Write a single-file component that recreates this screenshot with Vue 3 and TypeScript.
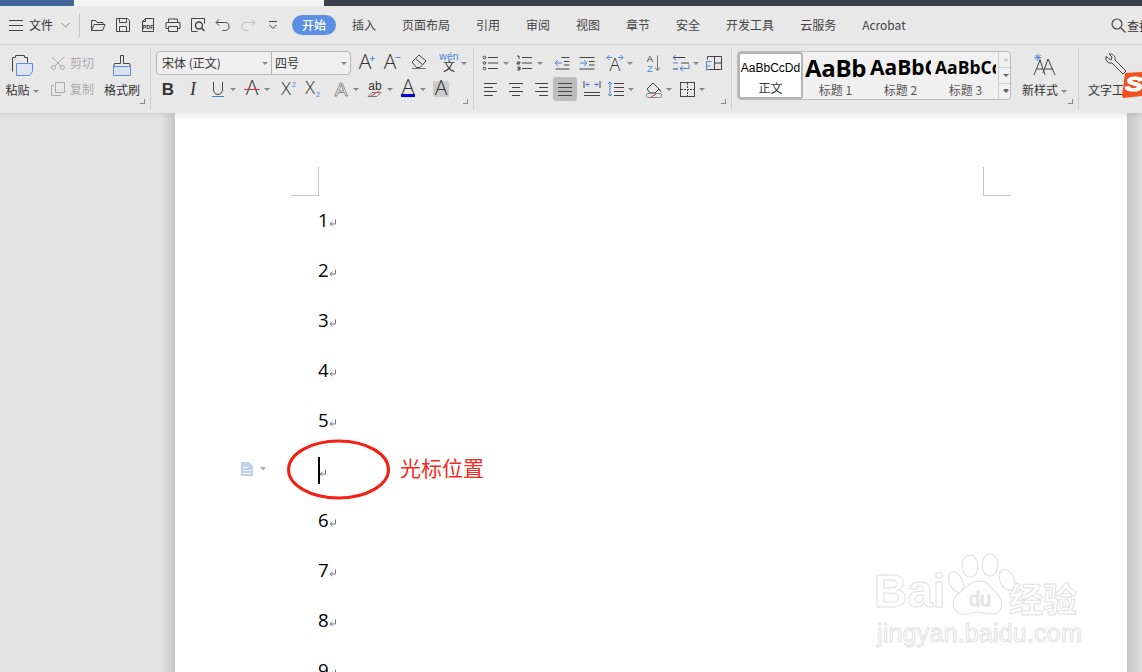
<script setup lang="ts">
interface Tool {
  i: string
  w: number
  caret?: boolean
  box?: boolean
}

const tabs = ['插入', '页面布局', '引用', '审阅', '视图', '章节', '安全', '开发工具', '云服务', 'Acrobat']
const quick = ['open', 'save', 'pdf', 'print', 'preview', 'undo', 'redo', 'more']
const lines = ['1', '2', '3', '4', '5', '', '6', '7', '8', '9']

const A = (extra = '', size = 21) =>
  `<text x="10" y="16" text-anchor="middle" font-family="Open Sans" font-weight="300" font-size="${size}" fill="#333" stroke="none" ${extra}>A</text>`

// every icon is drawn on a 20x20 box
const icons: Record<string, string> = {
  open: '<path d="M3.5 15.5v-10h4l1.5 2h6v2M3.5 15.5h11l2.5-6h-11z"/>',
  save: '<path d="M3.5 3.5h11l2 2v11h-13zM6.5 3.5v4h7v-4M6.5 16.5v-5h7v5"/>',
  pdf: '<path d="M7.5 3.5h8v13h-11v-10zM4.5 6.5h3v-3"/><text x="10" y="14" text-anchor="middle" font-family="Liberation Sans" font-weight="700" font-size="5.5" fill="#333" stroke="none">PDF</text>',
  print: '<path d="M5.5 7.5v-3.5h9v3.5M5.5 13.5h-2.5v-6h14v6h-2.5M5.5 11.5h9v5h-9z"/>',
  preview: '<path d="M16.5 8.5v-5h-13v13h6"/><circle cx="11" cy="10.5" r="3.5" stroke-width="1.4"/><path d="M13.5 13l3 3" stroke-width="1.5"/>',
  undo: '<path d="M6 4.5l-3 3 3 3M3.5 7.5h8a4 4 0 0 1 1 8h-3"/>',
  redo: '<path stroke="#bbb" d="M14 4.5l3 3-3 3M16.5 7.5h-8a4 4 0 0 0-1 8h3"/>',
  more: '<path d="M6 6.5h8M6.5 10l3.5 3.5 3.5-3.5"/>',
  grow: A('transform="translate(-1 0)"') + '<path stroke="#5a8fdc" d="M14 5.5h5M16.5 3v5"/>',
  shrink: A('transform="translate(-2 0)"') + '<path stroke="#5a8fdc" d="M13.5 4.5h5"/>',
  eraser: '<path d="M3 9l7-7 7 6-6 6.5h-3.5zM6.500 5.500l7 6"/><path stroke="#777" d="M3 15.500h14"/>',
  wen: '<text x="10" y="6.500" text-anchor="middle" font-family="Liberation Sans" font-size="10.500" fill="#4a86d8" stroke="none">wén</text><text x="10" y="18" text-anchor="middle" font-family="Noto Sans CJK SC" font-size="12" fill="#333" stroke="none">文</text>',
  bold: '<text x="10" y="16" text-anchor="middle" font-family="Liberation Sans" font-weight="700" font-size="17" fill="#333" stroke="none">B</text>',
  italic: '<text x="10" y="16" text-anchor="middle" font-family="Liberation Serif" font-style="italic" font-size="18" fill="#333" stroke="none">I</text>',
  under: '<path d="M5.500 3v8a4.500 4.500 0 0 0 9 0v-8"/><path stroke="#3f7fd8" d="M4 17.500h12"/>',
  strike: A('font-size="18"') + '<path stroke="#d33" d="M2 10.500h16"/>',
  sup: '<text x="8" y="16" text-anchor="middle" font-family="Open Sans" font-weight="300" font-size="18" fill="#333" stroke="none">X</text><text x="16" y="8" text-anchor="middle" font-family="Liberation Sans" font-size="7" fill="#4a86d8" stroke="none">2</text>',
  sub: '<text x="8" y="15" text-anchor="middle" font-family="Open Sans" font-weight="300" font-size="18" fill="#333" stroke="none">X</text><text x="16" y="18" text-anchor="middle" font-family="Liberation Sans" font-size="7" fill="#4a86d8" stroke="none">2</text>',
  outline: '<text x="10" y="16.500" text-anchor="middle" font-family="Liberation Sans" font-size="19" fill="#f4f4f4" stroke="#333" stroke-width=".5">A</text>',
  mark: '<text x="10" y="11" text-anchor="middle" font-family="Liberation Sans" font-size="12" fill="#333" stroke="none">ab</text><path d="M3 17.500l4-4h9l-4 4z" stroke="#777"/><path stroke="#d33" d="M6 17l8-5"/>',
  color: A('font-size="16" transform="translate(0 -1)"') + '<path stroke="#0000e0" stroke-width="3" d="M3 16.500h14"/>',
  shade: '<rect x="2" y="2" width="16" height="16" rx="1" fill="#ccc" stroke="none"/>' + A('font-size="16"'),
  bullets: '<circle cx="3.500" cy="4.500" r="1.300"/><circle cx="3.500" cy="10" r="1.300"/><circle cx="3.500" cy="15.500" r="1.300"/><path d="M7 4.500h10M7 10h10M7 15.500h10"/>',
  numbers: '<path d="M7 4.500h10M7 10h10M7 15.500h10M2 3h2v3M2 9h3v1h-3v1h3M2 14h3v3h-3M3 15.500h2"/>',
  outdent: '<path d="M9.500 4.500h8M12 8.500h5.500M12 12h5.500M3.500 16h14"/><path stroke="#4a86d8" d="M3 10h7M6 7l-3 3 3 3"/>',
  indent: '<path d="M2.500 4.500h15M12 8.500h5.500M12 12h5.500M2.500 16h15"/><path stroke="#4a86d8" d="M3 10h7M7 7l3 3-3 3"/>',
  dir: '<text x="10" y="18" text-anchor="middle" font-family="Open Sans" font-weight="300" font-size="18" fill="#333" stroke="none">A</text><path stroke="#4a86d8" d="M2 4.500h5M4.500 2l-2.500 2.500 2.500 2.500M13 4.500h5M15.500 2l2.500 2.500-2.500 2.500"/>',
  sort: '<text x="7" y="9" text-anchor="middle" font-family="Liberation Sans" font-size="9.500" fill="#333" stroke="none">A</text><text x="7" y="19" text-anchor="middle" font-family="Liberation Sans" font-size="9.500" fill="#4a86d8" stroke="none">Z</text><path stroke="#777" d="M14.500 2.500v15M12 14.500l2.500 3 2.500-3"/>',
  para: '<path d="M2 4.500h12M10 10h8M2 16h5"/><path stroke="#4a86d8" d="M5 2l-3 2.500 3 2.500M2 10h5M18 11.500v4h-9M12 13l-3 2.500 3 2.500"/>',
  table: '<path d="M3.500 3.500h14v13h-14M3.500 3.500v3M10.500 3.500v13M10.500 10h7"/><path stroke="#4a86d8" d="M2.500 8.500h5M2.500 8.500v9M2.500 13h4"/>',
  left: '<path d="M3 4.500h13M3 8.500h9M3 12.500h13M3 16.500h9"/>',
  center: '<path d="M3 4.500h14M6 8.500h8M3 12.500h14M6 16.500h8"/>',
  right: '<path d="M4 4.500h13M8 8.500h9M4 12.500h13M8 16.500h9"/>',
  justify: '<path d="M3 4.500h14M3 8.500h14M3 12.500h14M3 16.500h14"/>',
  dist: '<path d="M2 13.500h16M2 16.500h16M2 2v7M18 2v7"/><path stroke="#4a86d8" d="M4 5.500h4M6 3.500l-2 2 2 2M12 5.500h4M14 3.500l2 2-2 2"/>',
  spacing: '<path d="M8 4.500h10M8 8.500h10M8 12.500h10M8 16.500h10"/><path stroke="#4a86d8" d="M4 3v14M2 5l2-2 2 2M2 15l2 2 2-2"/>',
  fill: '<path d="M3 10l6-6 6 6-4 4h-5z"/><path d="M15 10l2 3"/><rect x="2.500" y="14.500" width="15" height="4" rx="1" stroke="#888"/><path stroke="#d33" d="M7 18l5-3"/>',
  border: '<rect x="3.500" y="3.500" width="14" height="14"/><path stroke-dasharray="2 1" d="M10.500 4v13M4 10.500h13"/>'
}

const row1: Tool[] = [
  { i: 'grow', w: 26 },
  { i: 'shrink', w: 27 },
  { i: 'eraser', w: 30 },
  { i: 'wen', w: 30, caret: true }
]
const row2: Tool[] = [
  { i: 'bold', w: 25 },
  { i: 'italic', w: 25 },
  { i: 'under', w: 34, caret: true },
  { i: 'strike', w: 35.5, caret: true },
  { i: 'sup', w: 24 },
  { i: 'sub', w: 29 },
  { i: 'outline', w: 34.5, caret: true },
  { i: 'mark', w: 32.5, caret: true },
  { i: 'color', w: 33.5, caret: true },
  { i: 'shade', w: 20 }
]
const row3: Tool[] = [
  { i: 'bullets', w: 34, caret: true },
  { i: 'numbers', w: 37, caret: true },
  { i: 'outdent', w: 25 },
  { i: 'indent', w: 27.5 },
  { i: 'dir', w: 38, caret: true },
  { i: 'sort', w: 28.5 },
  { i: 'para', w: 33, caret: true },
  { i: 'table', w: 20 }
]
const row4: Tool[] = [
  { i: 'left', w: 25 },
  { i: 'center', w: 25 },
  { i: 'right', w: 23.5 },
  { i: 'justify', w: 27.5, box: true },
  { i: 'dist', w: 24 },
  { i: 'spacing', w: 37.5, caret: true },
  { i: 'fill', w: 33.5, caret: true },
  { i: 'border', w: 30, caret: true }
]
const styles = [
  { cls: 's0', sample: 'AaBbCcDd', label: '正文' },
  { cls: 's1', sample: 'AaBb', label: '标题 1' },
  { cls: 's2', sample: 'AaBbC', label: '标题 2' },
  { cls: 's3', sample: 'AaBbCc', label: '标题 3' }
]
</script>

<template>
  <div class="app">
    <div class="titlebar">
      <div class="tb-blue"></div>
      <div class="tb-light"></div>
      <div class="tb-dark"></div>
    </div>

    <div class="menubar">
      <span class="burger"><i></i><i></i><i></i></span>
      <span class="file">文件</span>
      <svg class="chev" width="9" height="6" viewBox="0 0 9 6"><path d="M.5 1l4 4 4-4" /></svg>
      <span class="vsep"></span>
      <svg v-for="q in quick" :key="q" class="ico quick" width="20" height="20" viewBox="0 0 20 20" v-html="icons[q]"></svg>
      <span class="pill">开始</span>
      <div class="tabs">
        <span v-for="t in tabs" :key="t">{{ t }}</span>
      </div>
      <div class="search">
        <svg width="15" height="15" viewBox="0 0 15 15"><circle cx="6" cy="6" r="5" /><path d="M10 10l4.500 4.500" /></svg>
        <span>查找</span>
      </div>
    </div>

    <div class="ribbon">
      <div class="grp g1">
        <div class="big paste">
          <svg class="ico" width="24" height="24" viewBox="0 0 24 24">
            <path d="M2.500 18.500v-14h3v-2h9v2h3v5" />
            <path fill="#dbe5f3" stroke="#5a8fdc" d="M6.500 10.500h16v8l-3 4h-13z" />
          </svg>
          <span class="lbl">粘贴<b class="caret"></b></span>
        </div>
        <div class="small">
          <div class="smallrow">
            <svg class="ico off" width="16" height="16" viewBox="0 0 16 16"><circle cx="3.500" cy="12.500" r="2" /><circle cx="12.500" cy="12.500" r="2" /><path d="M2 2l9 9M14 2l-9 9" /></svg>
            <span>剪切</span>
          </div>
          <div class="smallrow">
            <svg class="ico off" width="16" height="16" viewBox="0 0 16 16"><path d="M5.500 1.500h9v10h-9zM3.500 4.500h-2v10h9v-1" /></svg>
            <span>复制</span>
          </div>
        </div>
        <div class="big brush">
          <svg class="ico" width="24" height="24" viewBox="0 0 24 24">
            <path d="M10.500 2.500h3v8h6l1 3h-17l1-3h6z" />
            <path fill="#dbe2ec" stroke="#5a8fdc" d="M3.500 13.500h17v9h-17z" />
          </svg>
          <span class="lbl">格式刷</span>
        </div>
        <span class="corner"></span>
      </div>

      <div class="grp g2">
        <div class="row">
          <div class="combo">
            <div class="combo-a">宋体 (正文)<b class="caret"></b></div>
            <div class="combo-b">四号<b class="caret"></b></div>
          </div>
          <div class="tools after-combo">
            <div v-for="t in row1" :key="t.i" class="tool" :style="{ width: t.w + 'px' }">
              <svg class="ico" width="20" height="20" viewBox="0 0 20 20" v-html="icons[t.i]"></svg>
              <b v-if="t.caret" class="caret"></b>
            </div>
          </div>
        </div>
        <div class="row tools">
          <div v-for="t in row2" :key="t.i" class="tool" :style="{ width: t.w + 'px' }">
            <svg class="ico" width="20" height="20" viewBox="0 0 20 20" v-html="icons[t.i]"></svg>
            <b v-if="t.caret" class="caret"></b>
          </div>
        </div>
        <span class="corner"></span>
      </div>

      <div class="grp g3">
        <div class="row tools">
          <div v-for="t in row3" :key="t.i" class="tool" :style="{ width: t.w + 'px' }">
            <svg class="ico" width="20" height="20" viewBox="0 0 20 20" v-html="icons[t.i]"></svg>
            <b v-if="t.caret" class="caret"></b>
          </div>
        </div>
        <div class="row tools">
          <div v-for="t in row4" :key="t.i" class="tool" :style="{ width: t.w + 'px' }">
            <span :class="{ pressed: t.box }">
              <svg class="ico" width="20" height="20" viewBox="0 0 20 20" v-html="icons[t.i]"></svg>
            </span>
            <b v-if="t.caret" class="caret"></b>
          </div>
        </div>
        <span class="corner"></span>
      </div>

      <div class="grp g4">
        <div class="gallery">
          <div v-for="s in styles" :key="s.cls" class="style" :class="s.cls">
            <div class="sample">{{ s.sample }}</div>
            <div class="style-lbl">{{ s.label }}</div>
          </div>
          <div class="scroll">
            <span><b class="up"></b></span>
            <span><b class="down"></b></span>
            <span class="last"><b class="down bar"></b></span>
          </div>
        </div>
        <div class="big newstyle">
          <svg class="ico" width="26" height="24" viewBox="0 0 26 24">
            <path stroke="#4a86d8" d="M6 1v7M2.500 4.500h7M3.500 2l5 5M8.500 2l-5 5" />
            <path d="M2 22l6-15 5 15M5 16h6M11 20l5-14 7 16M13 16h8" />
          </svg>
          <span class="lbl">新样式<b class="caret"></b></span>
        </div>
        <span class="corner"></span>
      </div>

      <div class="grp g5">
        <div class="big tool-word">
          <svg class="ico" width="26" height="26" viewBox="0 0 26 26">
            <path d="M2 3.500a5 5 0 0 0 6 6.500l11 11 3-3-11-11a5 5 0 0 0-6-6l3 3-1 3z" />
          </svg>
          <span class="lbl">文字工具</span>
        </div>
      </div>
      <svg class="sogou" width="21" height="26" viewBox="0 0 21 26">
        <path fill="#f1511f" d="M3 1l18-1v24l-20 2-1-2z" />
        <text x="12" y="19.500" text-anchor="middle" font-family="Liberation Sans" font-weight="700" font-style="italic" font-size="21" fill="#fff" stroke="#fff" stroke-width="1.200" transform="translate(-3 0) scale(1.250 1)">S</text>
      </svg>
    </div>

    <div class="work">
      <div class="page">
        <span class="crop crop-l"></span>
        <span class="crop crop-r"></span>
        <div class="body">
          <div v-for="(l, n) in lines" :key="n" class="line">
            <span v-if="l" class="num">{{ l }}</span>
            <span v-else class="cursor"></span>
            <svg class="ret" :class="{ 'ret-c': !l }" width="8" height="8" viewBox="0 0 8 8"><path d="M6.500 .5v4.500h-5.500M3.500 3l-2.500 2 2.500 2" /></svg>
          </div>
        </div>

        <svg class="docmark" width="30" height="16" viewBox="0 0 30 16">
          <path fill="#bed0ea" d="M1 1h8l4 4v10h-12z" />
          <path stroke="#fff" stroke-width="1" d="M3 6.500h5M3 9.500h8M3 12.500h8" />
          <path fill="#aaa" d="M20 6h6l-3 3.500z" />
        </svg>
        <svg class="ring" width="106" height="62" viewBox="0 0 106 62">
          <ellipse cx="52.500" cy="30.500" rx="50" ry="28.500" />
        </svg>
        <span class="note">光标位置</span>

        <div class="mark">
          <svg class="paw" width="72" height="72" viewBox="0 0 72 72">
            <ellipse cx="23" cy="16" rx="8" ry="11" />
            <ellipse cx="43" cy="15" rx="8" ry="11" />
            <ellipse cx="9" cy="32" rx="6.500" ry="11" transform="rotate(-25 9 32)" />
            <ellipse cx="60" cy="30" rx="7" ry="11" transform="rotate(-25 60 30)" />
            <path d="M33 31c8 0 11 8 17 13 7 6 7 20-6 20-6 0-10-2-13-2-5 0-8 3-15 2-11-1-13-14-5-20 8-6 12-13 22-13z" />
            <text x="33" y="56" text-anchor="middle" font-family="Liberation Sans" font-size="20">du</text>
          </svg>
          <span class="mark-bai">Bai</span>
          <span class="mark-cn">经验</span>
          <span class="mark-url">jingyan.baidu.com</span>
        </div>
      </div>
    </div>
  </div>
</template>

<style scoped>
.app {
  width: 1142px;
  height: 672px;
  overflow: hidden;
  display: flex;
  flex-direction: column;
  background: #e3e3e3;
  font-family: "Noto Sans CJK SC", "Liberation Sans", sans-serif;
  font-size: 12px;
  color: #444;
}

.titlebar {
  display: flex;
  height: 6px;
  flex: none;
}
.tb-blue { width: 74px; background: #44659a; }
.tb-light { width: 250px; background: #f4f4f4; }
.tb-dark { flex: 1; background: #3c404e; }

.menubar {
  height: 38px;
  flex: none;
  display: flex;
  align-items: center;
  padding-left: 9px;
  background: #e8e8e8;
  border-bottom: 1px solid #d6d6d6;
}
.burger {
  width: 14px;
  display: flex;
  flex-direction: column;
  gap: 4px;
  margin-right: 6px;
}
.burger i { display: block; height: 1px; background: #444; }
.file { width: 24px; color: #333; margin-right: 8px; margin-top: -2px; }
.chev { fill: none; stroke: #888; margin-right: 9px; }
.vsep { width: 1px; height: 24px; background: #c4c4c4; margin-right: 8px; }
.ico {
  flex: none;
  display: block;
  overflow: visible;
  fill: none;
  stroke: #444;
  stroke-width: 1;
}
.quick { margin-right: 5px; margin-left: 0; }
.pill {
  width: 44px;
  height: 20px;
  line-height: 19px;
  margin-left: 4px;
  text-align: center;
  border-radius: 10px;
  background: #5b8fe3;
  color: #fff;
  font-weight: 500;
}
.tabs {
  display: flex;
  gap: 26px;
  margin-left: 16px;
  margin-top: -2px;
}
.tabs span { white-space: nowrap; }
.search {
  margin-left: auto;
  margin-right: -14px;
  display: flex;
  align-items: center;
  gap: 1px;
  width: 45px;
  flex: none;
  color: #333;
}
.search svg { fill: none; stroke: #444; stroke-width: 1.2; }
.search span { white-space: nowrap; }

.ribbon {
  height: 68px;
  flex: none;
  display: flex;
  position: relative;
  background: #e8e8e8;
}
.grp {
  position: relative;
  flex: none;
  height: 62px;
  margin-top: 3px;
  border-right: 1px solid #d0d0d0;
  box-sizing: border-box;
  color: #333;
}
.g1 { width: 151px; display: flex; }
.g2 { width: 323px; padding: 2px 0 0 5px; }
.g3 { width: 258px; padding: 2px 0 0 7px; }
.g4 { width: 347px; padding: 3px 0 0 5px; display: flex; }
.g5 { flex: 1; border-right: 0; }
.corner {
  position: absolute;
  right: 5px;
  bottom: 6px;
  width: 4px;
  height: 4px;
  border-right: 1px solid #888;
  border-bottom: 1px solid #888;
}
.big {
  display: flex;
  flex-direction: column;
  align-items: center;
  padding-top: 5px;
  gap: 4px;
}
.lbl { white-space: nowrap; line-height: 18px; }
.paste { width: 44px; }
.brush { width: 48px; }
.small {
  width: 54px;
  padding-left: 6px;
  box-sizing: border-box;
  display: flex;
  flex-direction: column;
  padding-top: 6px;
  gap: 9px;
}
.smallrow {
  display: flex;
  align-items: center;
  gap: 4px;
  height: 17px;
  color: #aaa;
}
.off { stroke: #aaa; }
.caret {
  display: inline-block;
  width: 0;
  height: 0;
  margin-left: 3px;
  border: 3px solid transparent;
  border-top: 3px solid #888;
  border-bottom-width: 0;
  vertical-align: middle;
  flex: none;
}
.row {
  height: 26px;
  display: flex;
  align-items: center;
}
.tools { display: flex; align-items: center; }
.g2 > .tools { padding-left: 2px; }
.after-combo { margin-left: 5px; }
.tool {
  flex: none;
  height: 24px;
  display: flex;
  align-items: center;
}
.tool .caret { margin-left: 2px; }
.pressed {
  display: block;
  padding: 2px;
  margin-left: -2px;
  background: #bdbdbd;
  border-radius: 3px;
}
.combo {
  display: flex;
  width: 195px;
  height: 24px;
  box-sizing: border-box;
  border: 1px solid #b5b5b5;
  border-radius: 4px;
  background: #efefef;
  line-height: 22px;
}
.combo-a, .combo-b {
  display: flex;
  align-items: center;
  justify-content: space-between;
  box-sizing: border-box;
  padding: 0 3px 0 5px;
}
.combo-a { width: 115px; border-right: 1px solid #b5b5b5; }
.combo-b { flex: 1; padding-left: 3px; }

.gallery {
  display: flex;
  width: 274px;
  height: 49px;
  box-sizing: border-box;
  border: 1px solid #bbb;
  border-radius: 4px;
  background: #f0f0f0;
  flex: none;
  position: relative;
}
.style {
  width: 65px;
  flex: none;
  overflow: hidden;
  text-align: center;
  color: #555;
  display: flex;
  flex-direction: column;
  box-sizing: border-box;
  padding: 0 2px;
}
.sample {
  height: 29px;
  line-height: 31px;
  white-space: nowrap;
  overflow: hidden;
  color: #000;
  text-align: left;
  font-family: "Open Sans", "Liberation Sans", sans-serif;
  font-weight: 700;
}
.style-lbl { line-height: 18px; }
.s0 {
  width: 65px;
  background: #fff;
  border: 2px solid #b4b4b4;
  border-radius: 3px;
  margin: 0;
  padding: 0;
  color: #333;
}
.s0 .sample {
  font-family: "Liberation Sans", sans-serif;
  font-weight: 400;
  font-size: 12px;
  text-align: center;
  height: 27px;
  line-height: 28px;
}
.s1 .sample { font-size: 24px; letter-spacing: -.3px; }
.s2 .sample { font-size: 21px; }
.s3 .sample { font-size: 17.5px; }
.scroll {
  width: 13px;
  flex: none;
  margin-left: auto;
  display: flex;
  flex-direction: column;
  border-left: 1px solid #ccc;
}
.scroll span {
  flex: 1;
  display: flex;
  align-items: center;
  justify-content: center;
  border-bottom: 1px solid #ccc;
}
.scroll .last { border-bottom: 0; }
.scroll b { width: 0; height: 0; border: 3px solid transparent; }
.up { border-top-width: 0 !important; border-bottom-color: #ccc !important; }
.down { border-bottom-width: 0 !important; border-top-color: #666 !important; }
.bar { box-shadow: 0 -2px 0 -1px #666; }
.newstyle { width: 72px; margin: -3px 0 0 0; }
.tool-word { width: 60px; align-items: flex-start; padding-left: 9px; gap: 2px; }
.tool-word svg { margin-left: 16px; }
.sogou {
  position: absolute;
  left: 1122px;
  top: 27px;
}

.work {
  flex: 1;
  min-height: 0;
  display: flex;
  justify-content: center;
  padding-right: 30px;
  padding-left: 0;
  background: linear-gradient(90deg, #e3e3e3 0, #e3e3e3 160px, #c8c8c8 175px, #c8c8c8 1127px, #dcdcdc 1142px);
  box-shadow: inset 0 5px 5px -4px rgba(0, 0, 0, .1);
}
.page {
  position: relative;
  width: 952px;
  flex: none;
  margin-left: 175px;
  margin-right: -15px;
  background: #fff;
  padding: 82px 0 0 143px;
  box-sizing: border-box;
  overflow: hidden;
  background-image: linear-gradient(#ececec, #fff 7px);
}
.crop { position: absolute; top: 54px; width: 28px; height: 29px; box-sizing: border-box; border-bottom: 1px solid #c4c4c4; }
.crop-l { left: 116px; border-right: 1px solid #c4c4c4; }
.crop-r { left: 808px; border-left: 1px solid #c4c4c4; }
.line {
  height: 50px;
  display: flex;
  align-items: center;
  position: relative;
  font-family: "Open Sans", "Liberation Sans", sans-serif;
  font-size: 18.67px;
  color: #000;
}
.num { line-height: 50px; }
.ret { fill: none; stroke: #777; margin: 6px 0 0 0; }
.ret-c { margin-left: -1px; }
.cursor { width: 2px; height: 27px; background: #000; margin-left: 0; }
.docmark { position: absolute; left: 65px; top: 348px; fill: none; stroke: none; }
.ring { position: absolute; left: 111px; top: 326px; fill: none; stroke: #f32014; stroke-width: 3; }
.note {
  position: absolute;
  left: 225px;
  top: 340px;
  font-size: 21px;
  line-height: 28px;
  color: #f32a1e;
  white-space: nowrap;
}
.mark {
  position: absolute;
  left: 702px;
  top: 437px;
  width: 210px;
  height: 100px;
  color: #fff;
  -webkit-text-stroke: 1px #e2e2e2;
}
.mark > span { position: absolute; white-space: nowrap; }
.paw { position: absolute; left: 70px; top: 0; fill: #fff; stroke: #e2e2e2; stroke-width: 1.2; }
.mark-bai { left: -3px; top: 16px; font: 700 46px/50px "Liberation Sans", sans-serif; }
.mark-cn { left: 132px; top: 26px; font-size: 34px; line-height: 44px; font-weight: 700; }
.mark-url { left: 0; top: 68px; font: 400 25px/30px "Liberation Sans", sans-serif; letter-spacing: .2px; }
</style>
